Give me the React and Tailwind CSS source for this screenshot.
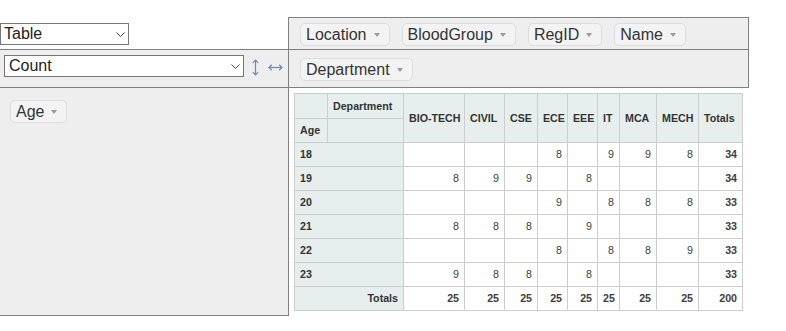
import React from "react";

const cols = ["BIO-TECH", "CIVIL", "CSE", "ECE", "EEE", "IT", "MCA", "MECH"];

const rows = [
    ["18", [null, null, null, 8, null, 9, 9, 8], 34],
    ["19", [8, 9, 9, null, 8, null, null, null], 34],
    ["20", [null, null, null, 9, null, 8, 8, 8], 33],
    ["21", [8, 8, 8, null, 9, null, null, null], 33],
    ["22", [null, null, null, 8, null, 8, 8, 9], 33],
    ["23", [9, 8, 8, null, 8, null, null, null], 33],
];

const colTotals = [25, 25, 25, 25, 25, 25, 25, 25];

const th = "border border-[#cdcdcd] bg-[#e6eeee] p-[5px] text-[8pt] leading-[13px] font-bold text-[#333] text-left whitespace-nowrap";
const td = "border border-[#cdcdcd] bg-white p-[5px] text-[8pt] leading-[13px] text-[#3d3d3d] text-right align-top";

// attribute pill with the little dropdown triangle
const Chip = ({ label }) => (
    <span className="inline-flex items-center h-[23px] px-[5px] bg-[#f3f3f3] border border-[#dddddd] rounded-[5px] text-[16px] leading-[17px] text-[#333]">
        {label}
        <svg className="ml-[7px] mr-[4px]" width="6" height="4" viewBox="0 0 6 4">
            <path d="M0 0H6L3 4Z" fill="#9a9a9a" />
        </svg>
    </span>
);

const FakeSelect = ({ value, className }) => (
    <div className={`flex items-center justify-between h-[22px] bg-white border border-[#767676] pl-[3px] pr-[3px] text-[16px] text-[#222] ${className}`}>
        <span>{value}</span>
        <svg width="9" height="5" viewBox="0 0 9 5" fill="none">
            <path d="M0.5 0.5L4.5 4.5L8.5 0.5" stroke="#444" strokeWidth="1" />
        </svg>
    </div>
);

const PivotTable = () => (
    <table className="table-fixed w-[449px] border-collapse border border-[#cdcdcd]">
        <colgroup>
            <col className="w-[33px]" />
            <col className="w-[76px]" />
            <col className="w-[61px]" />
            <col className="w-[40px]" />
            <col className="w-[33px]" />
            <col className="w-[30px]" />
            <col className="w-[30px]" />
            <col className="w-[22px]" />
            <col className="w-[37px]" />
            <col className="w-[42px]" />
            <col className="w-[44px]" />
        </colgroup>
        <thead>
            <tr>
                <th className={`${th} h-[25px]`}></th>
                <th className={th}>Department</th>
                {cols.map((c) => (
                    <th key={c} rowSpan={2} className={`${th} align-middle`}>{c}</th>
                ))}
                <th rowSpan={2} className={`${th} align-middle`}>Totals</th>
            </tr>
            <tr>
                <th className={th}>Age</th>
                <th className={th}></th>
            </tr>
        </thead>
        <tbody>
            {rows.map(([age, vals, total]) => (
                <tr key={age}>
                    <th colSpan={2} className={th}>{age}</th>
                    {vals.map((v, i) => (
                        <td key={i} className={td}>{v ?? ""}</td>
                    ))}
                    <td className={`${td} font-bold`}>{total}</td>
                </tr>
            ))}
            <tr>
                <th colSpan={2} className={`${th} text-right`}>Totals</th>
                {colTotals.map((v, i) => (
                    <td key={i} className={`${td} font-bold`}>{v}</td>
                ))}
                <td className={`${td} font-bold`}>200</td>
            </tr>
        </tbody>
    </table>
);

const App = () => {
    return (
        <div className="min-h-screen bg-white pt-[17px] font-['Liberation_Sans',Arial,sans-serif] select-none">
            <div className="grid grid-cols-[289px_460px] w-[749px]">
                {/* renderer */}
                <div className="h-[32px] border-r border-[#808080] pt-[6px]">
                    <FakeSelect value="Table" className="w-[129px]" />
                </div>
                {/* unused attrs */}
                <div className="h-[32px] border-t border-r border-[#808080] bg-[#eeeeee] pt-[5px] pl-[11px] flex gap-[12px] items-start">
                    <Chip label="Location" />
                    <Chip label="BloodGroup" />
                    <Chip label="RegID" />
                    <Chip label="Name" />
                </div>

                {/* aggregator + sort order toggles */}
                <div className="h-[38px] border-t border-r border-[#808080] bg-[#eeeeee] pt-[5px] pl-[4px] flex items-start">
                    <FakeSelect value="Count" className="w-[240px] pl-[4px]" />
                    <svg className="ml-[8px] mt-[4px]" width="7" height="17" viewBox="0 0 7 17" fill="none" stroke="#6b8bb5" strokeWidth="1.2">
                        <path d="M3.5 1V16" />
                        <path d="M0.8 3.8L3.5 1L6.2 3.8" />
                        <path d="M0.8 13.2L3.5 16L6.2 13.2" />
                    </svg>
                    <svg className="ml-[9px] mt-[9px]" width="15" height="7" viewBox="0 0 15 7" fill="none" stroke="#6b8bb5" strokeWidth="1.2">
                        <path d="M1 3.5H14" />
                        <path d="M3.8 0.8L1 3.5L3.8 6.2" />
                        <path d="M11.2 0.8L14 3.5L11.2 6.2" />
                    </svg>
                </div>
                {/* col attrs */}
                <div className="h-[38px] border-t border-r border-[#808080] bg-[#eeeeee] pt-[8px] pl-[11px] flex items-start">
                    <Chip label="Department" />
                </div>

                {/* row attrs */}
                <div className="border-t border-r border-b border-[#808080] bg-[#eeeeee] pt-[12px] pl-[10px]">
                    <Chip label="Age" />
                </div>
                {/* output */}
                <div className="border-t border-[#808080] p-[5px]">
                    <PivotTable />
                </div>
            </div>
        </div>
    );
};

export default App;
